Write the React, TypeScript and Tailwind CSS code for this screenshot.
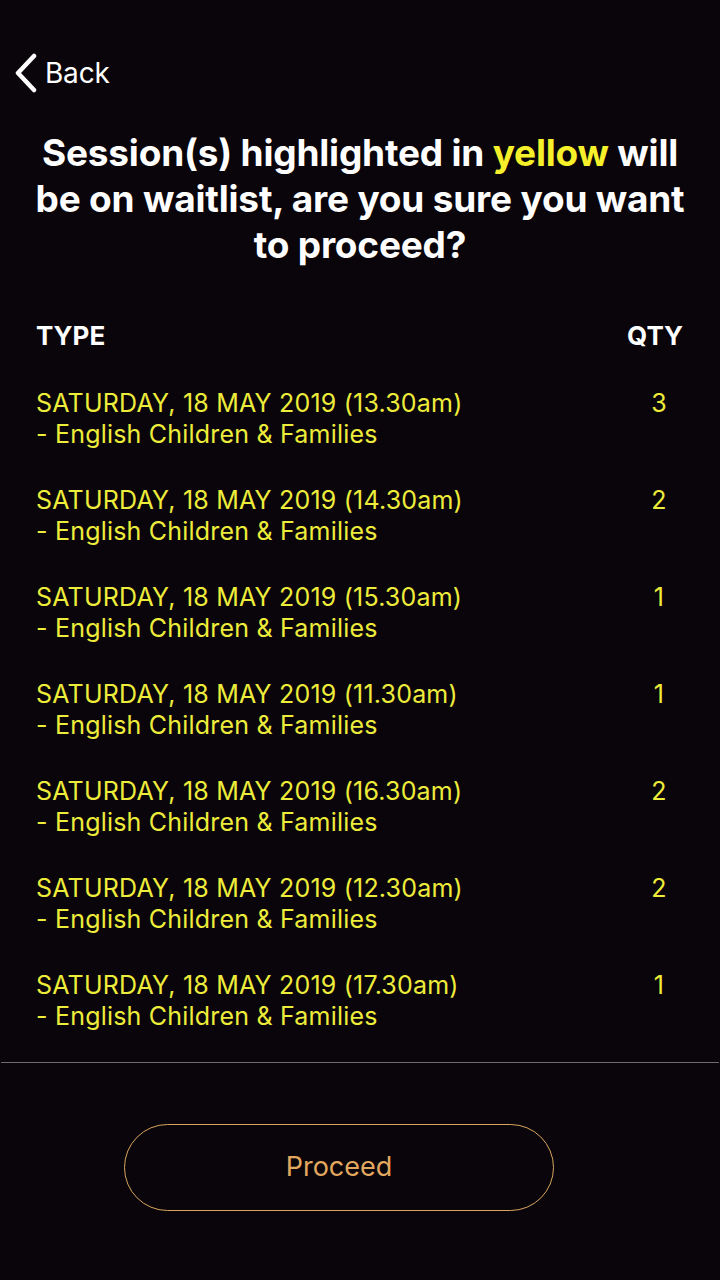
import React from "react";

const rows = [
  ["13.30am", "3"],
  ["14.30am", "2"],
  ["15.30am", "1"],
  ["11.30am", "1"],
  ["16.30am", "2"],
  ["12.30am", "2"],
  ["17.30am", "1"],
];

export default function App() {
  return (
    <div
      className="w-[720px] h-[1280px] bg-[#09050a] text-white flex flex-col overflow-hidden"
      style={{ fontFamily: "Inter, 'Noto Sans', sans-serif" }}
    >
      <div className="h-[145px] flex flex-col">
        <div className="flex items-center pl-[14px] pt-[53px] gap-[7px]">
          <svg width="24" height="40" viewBox="0 0 24 40" fill="none">
            <path d="M20 3 L4 20 L20 37" stroke="white" strokeWidth="4.5" strokeLinecap="round" strokeLinejoin="round" />
          </svg>
          <span className="text-[28px] leading-[38px] tracking-[-0.2px]">Back</span>
        </div>
      </div>
      <h1 className="text-center font-bold text-[37px] leading-[46px] tracking-[-0.2px] px-[30px] mt-[-15px]">
        Session(s) highlighted in <span className="text-[#f5f02a]">yellow</span> will be on waitlist, are you sure you want to proceed?
      </h1>
      <div className="flex justify-between pl-[36px] pr-[37px] mt-[50px] font-bold text-[26px] leading-[36px]">
        <span>TYPE</span>
        <span>QTY</span>
      </div>
      <div className="flex flex-col mt-[34px] text-[#eeec3a] text-[25px] leading-[31px] tracking-[0.2px] gap-[35px] pl-[36px]">
        {rows.map(([t, q], i) => (
          <div key={i} className="flex">
            <div className="flex-1">
              <div>SATURDAY, 18 MAY 2019 ({t})</div>
              <div>- English Children &amp; Families</div>
            </div>
            <div className="w-[80px] text-center mr-[21px]">{q}</div>
          </div>
        ))}
      </div>
      <div className="h-px bg-[#6f6a6f] mt-[30px] mx-px" />
      <div className="flex mt-[61px] pl-[124px]">
        <button className="w-[430px] h-[87px] rounded-full border border-[#d9a55c] text-[#e3a85f] text-[27px]">
          Proceed
        </button>
      </div>
    </div>
  );
}
